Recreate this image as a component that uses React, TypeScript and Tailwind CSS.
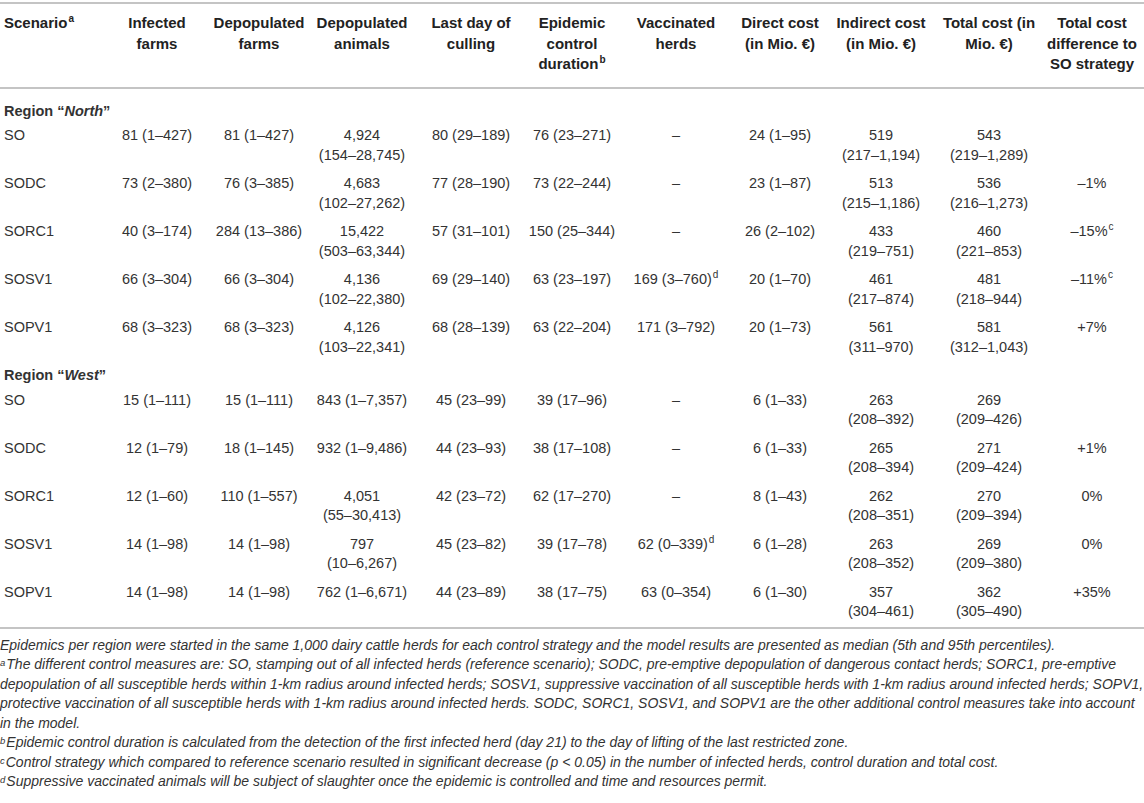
import React from 'react';

type Row = {
    name: string;
    cells: string[];
};

// "a|b" puts b on a second line, "^x" at the end adds a superscript
const north: Row[] = [
    { name: 'SO', cells: ['81 (1–427)', '81 (1–427)', '4,924|(154–28,745)', '80 (29–189)', '76 (23–271)', '–', '24 (1–95)', '519|(217–1,194)', '543|(219–1,289)', ''] },
    { name: 'SODC', cells: ['73 (2–380)', '76 (3–385)', '4,683|(102–27,262)', '77 (28–190)', '73 (22–244)', '–', '23 (1–87)', '513|(215–1,186)', '536|(216–1,273)', '–1%'] },
    { name: 'SORC1', cells: ['40 (3–174)', '284 (13–386)', '15,422|(503–63,344)', '57 (31–101)', '150 (25–344)', '–', '26 (2–102)', '433|(219–751)', '460|(221–853)', '–15%^c'] },
    { name: 'SOSV1', cells: ['66 (3–304)', '66 (3–304)', '4,136|(102–22,380)', '69 (29–140)', '63 (23–197)', '169 (3–760)^d', '20 (1–70)', '461|(217–874)', '481|(218–944)', '–11%^c'] },
    { name: 'SOPV1', cells: ['68 (3–323)', '68 (3–323)', '4,126|(103–22,341)', '68 (28–139)', '63 (22–204)', '171 (3–792)', '20 (1–73)', '561|(311–970)', '581|(312–1,043)', '+7%'] },
];

const west: Row[] = [
    { name: 'SO', cells: ['15 (1–111)', '15 (1–111)', '843 (1–7,357)', '45 (23–99)', '39 (17–96)', '–', '6 (1–33)', '263|(208–392)', '269|(209–426)', ''] },
    { name: 'SODC', cells: ['12 (1–79)', '18 (1–145)', '932 (1–9,486)', '44 (23–93)', '38 (17–108)', '–', '6 (1–33)', '265|(208–394)', '271|(209–424)', '+1%'] },
    { name: 'SORC1', cells: ['12 (1–60)', '110 (1–557)', '4,051|(55–30,413)', '42 (23–72)', '62 (17–270)', '–', '8 (1–43)', '262|(208–351)', '270|(209–394)', '0%'] },
    { name: 'SOSV1', cells: ['14 (1–98)', '14 (1–98)', '797|(10–6,267)', '45 (23–82)', '39 (17–78)', '62 (0–339)^d', '6 (1–28)', '263|(208–352)', '269|(209–380)', '0%'] },
    { name: 'SOPV1', cells: ['14 (1–98)', '14 (1–98)', '762 (1–6,671)', '44 (23–89)', '38 (17–75)', '63 (0–354)', '6 (1–30)', '357|(304–461)', '362|(305–490)', '+35%'] },
];

const widths = ['w-[106px]', 'w-[102px]', 'w-[102px]', 'w-[104px]', 'w-[114px]', 'w-[88px]', 'w-[120px]', 'w-[88px]', 'w-[114px]', 'w-[102px]', 'w-[104px]'];

const Value: React.FC<{ text: string }> = ({ text }) => {
    const lines = text.split('|');
    return (
        <>
            {lines.map((line, i) => {
                const [main, sup] = line.split('^');
                return (
                    <div key={i} className="whitespace-nowrap">
                        {main}
                        {sup && <sup className="text-[10px] leading-none -top-[6px] ml-[1px]">{sup}</sup>}
                    </div>
                );
            })}
        </>
    );
};

const DataRow: React.FC<{ row: Row }> = ({ row }) => (
    <tr className="align-top">
        <td className="pl-[4px] pt-[4px] pb-[5px] text-left">{row.name}</td>
        {row.cells.map((c, i) => (
            <td key={i} className="pt-[4px] pb-[5px] text-center">
                <Value text={c} />
            </td>
        ))}
    </tr>
);

const RegionRow: React.FC<{ label: string; first?: boolean }> = ({ label, first }) => (
    <tr>
        <td colSpan={11} className={`pl-[4px] pb-[1px] text-left font-bold ${first ? 'pt-[13px]' : 'pt-[4px]'}`}>
            Region “<i>{label}</i>”
        </td>
    </tr>
);

const Note: React.FC<{ mark?: string; children: React.ReactNode }> = ({ mark, children }) => (
    <p>
        {mark && <sup className="text-[9.5px] leading-none -top-[3px] mr-[1px]">{mark}</sup>}
        {children}
    </p>
);

export default function App() {
    const headers = [
        'Scenario^a',
        'Infected|farms',
        'Depopulated|farms',
        'Depopulated|animals',
        'Last day of|culling',
        'Epidemic|control|duration^b',
        'Vaccinated|herds',
        'Direct cost|(in Mio. €)',
        'Indirect cost|(in Mio. €)',
        'Total cost (in|Mio. €)',
        'Total cost|difference to|SO strategy',
    ];

    return (
        <div className="w-[1144px] bg-white pt-[2px] text-[#333] font-['Liberation_Sans',Arial,sans-serif]">
            <table className="w-[1144px] table-fixed border-collapse text-[14.5px] leading-[19.5px]">
                <colgroup>
                    {widths.map((w, i) => (
                        <col key={i} className={w} />
                    ))}
                </colgroup>
                <thead>
                    <tr className="align-top border-t-2 border-b-2 border-[#c4c4c4]">
                        {headers.map((h, i) => (
                            <th
                                key={h}
                                className={`pt-[9px] pb-[12px] text-[15px] font-bold leading-[20.5px] text-[#222] ${i === 0 ? 'pl-[4px] text-left' : 'text-center'}`}
                            >
                                <Value text={h} />
                            </th>
                        ))}
                    </tr>
                </thead>
                <tbody>
                    <RegionRow label="North" first />
                    {north.map(r => (
                        <DataRow key={'n' + r.name} row={r} />
                    ))}
                    <RegionRow label="West" />
                    {west.map(r => (
                        <DataRow key={'w' + r.name} row={r} />
                    ))}
                </tbody>
            </table>

            <div className="border-t-2 border-[#c4c4c4] pt-[7px] text-[14px] leading-[19.5px] italic">
                <Note>
                    Epidemics per region were started in the same 1,000 dairy cattle herds for each control strategy and the model results are presented as median (5th and 95th percentiles).
                </Note>
                <Note mark="a">
                    The different control measures are: SO, stamping out of all infected herds (reference scenario); SODC, pre-emptive depopulation of dangerous contact herds; SORC1, pre-emptive depopulation of all susceptible herds within 1-km radius around infected herds; SOSV1, suppressive vaccination of all susceptible herds with 1-km radius around infected herds; SOPV1, protective vaccination of all susceptible herds with 1-km radius around infected herds. SODC, SORC1, SOSV1, and SOPV1 are the other additional control measures take into account in the model.
                </Note>
                <Note mark="b">
                    Epidemic control duration is calculated from the detection of the first infected herd (day 21) to the day of lifting of the last restricted zone.
                </Note>
                <Note mark="c">
                    Control strategy which compared to reference scenario resulted in significant decrease (p &lt; 0.05) in the number of infected herds, control duration and total cost.
                </Note>
                <Note mark="d">
                    Suppressive vaccinated animals will be subject of slaughter once the epidemic is controlled and time and resources permit.
                </Note>
            </div>
        </div>
    );
}
